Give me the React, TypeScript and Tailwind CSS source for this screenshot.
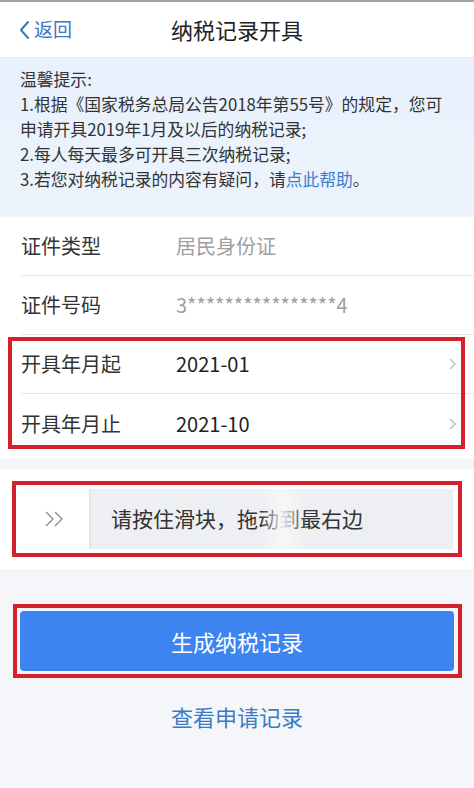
import type { ReactNode } from "react";

const cjk = { fontFamily: '"Noto Sans CJK SC", "Noto Sans", sans-serif' };

function Row({ label, value, muted, arrow, divider = true }: { label: string; value: string; muted?: boolean; arrow?: boolean; divider?: boolean }) {
  return (
    <div className="pl-[21px]">
      <div className={`flex h-[59px] items-center pr-[17px] ${divider ? "border-b border-[#e8e8ea]" : ""}`}>
        <span className="w-[155px] text-[20px] text-[#333]">{label}</span>
        <span className={`flex-1 text-[20px] ${muted ? "text-[#a0a0a0]" : "text-[#222]"}`}>{value}</span>
        {arrow && (
          <svg width="9" height="14" viewBox="0 0 9 14">
            <path d="M2 2l5 5-5 5" fill="none" stroke="#c4c4c4" strokeWidth="1.6" />
          </svg>
        )}
      </div>
    </div>
  );
}

function RedBox({ children, className }: { children: ReactNode; className: string }) {
  return (
    <div className="relative">
      {children}
      <div className={`pointer-events-none absolute border-[4px] border-[#d4212b] ${className}`} />
    </div>
  );
}

export default function App() {
  return (
    <div className="flex h-[788px] w-[474px] flex-col overflow-hidden bg-[#f5f6f9]" style={cjk}>
      <div className="h-[2px] bg-[#a4a4a4]" />
      <div className="relative flex h-[56px] items-center justify-center border-b border-[#e4e8ee] bg-white">
        <div className="absolute left-[18px] top-0 flex h-full items-center gap-[3px] text-[19px] text-[#3a78c4]">
          <svg width="13" height="20" viewBox="0 0 13 20">
            <path d="M10 2L3 10l7 8" fill="none" stroke="#3a78c4" strokeWidth="2" strokeLinecap="round" strokeLinejoin="round" />
          </svg>
          <span>返回</span>
        </div>
        <span className="text-[22px] text-[#222]">纳税记录开具</span>
      </div>

      <div className="whitespace-nowrap bg-gradient-to-b from-[#e8f1fc] to-[#ecf3fc] px-[20px] pt-[9px] pb-[23px] text-[16.8px] leading-[25px] text-[#333]">
        <p>温馨提示:</p>
        <p>1.根据《国家税务总局公告2018年第55号》的规定，您可</p>
        <p>申请开具2019年1月及以后的纳税记录;</p>
        <p>2.每人每天最多可开具三次纳税记录;</p>
        <p>
          3.若您对纳税记录的内容有疑问，请<span className="text-[#3b7fc9]">点此帮助</span>。
        </p>
      </div>

      <div className="mt-[2px] bg-white pb-[6px]">
        <Row label="证件类型" value="居民身份证" muted />
        <Row label="证件号码" value="3****************4" muted />
        <RedBox className="left-[8px] right-[9px] top-[2px] bottom-[4px]">
          <Row label="开具年月起" value="2021-01" arrow />
          <Row label="开具年月止" value="2021-10" arrow divider={false} />
        </RedBox>
      </div>

      <div className="mt-[10px] flex h-[100px] items-center bg-white px-[20px]">
        <RedBox className="-left-[8px] -right-[9px] -top-[8px] -bottom-[8px]">
          <div className="flex h-[60px] w-[433px] bg-[#eeeff2]">
            <div className="flex w-[69px] items-center justify-center bg-white shadow-[1px_0_2px_rgba(0,0,0,0.08)]">
              <svg width="22" height="16" viewBox="0 0 22 16">
                <path d="M2 1l7 7-7 7M11 1l7 7-7 7" fill="none" stroke="#8a8a8a" strokeWidth="1.3" />
              </svg>
            </div>
            <div className="relative flex flex-1 items-center pl-[22px] text-[21px] text-[#333]">
              <span>请按住滑块，拖动到最右边</span>
              <div className="absolute top-0 bottom-0 left-[172px] w-[44px] bg-gradient-to-r from-transparent via-[#f8f8f9] to-transparent opacity-90" />
            </div>
          </div>
        </RedBox>
      </div>

      <div className="mt-[42px] px-[20px]">
        <RedBox className="-left-[7px] -right-[8px] -top-[7px] -bottom-[7px]">
          <button className="flex h-[60px] w-full items-center justify-center rounded-[4px] bg-[#3e84f0] text-[22px] text-white">
            生成纳税记录
          </button>
        </RedBox>
      </div>

      <div className="mt-[29px] text-center text-[22px] text-[#3a7cc4]">查看申请记录</div>
    </div>
  );
}
